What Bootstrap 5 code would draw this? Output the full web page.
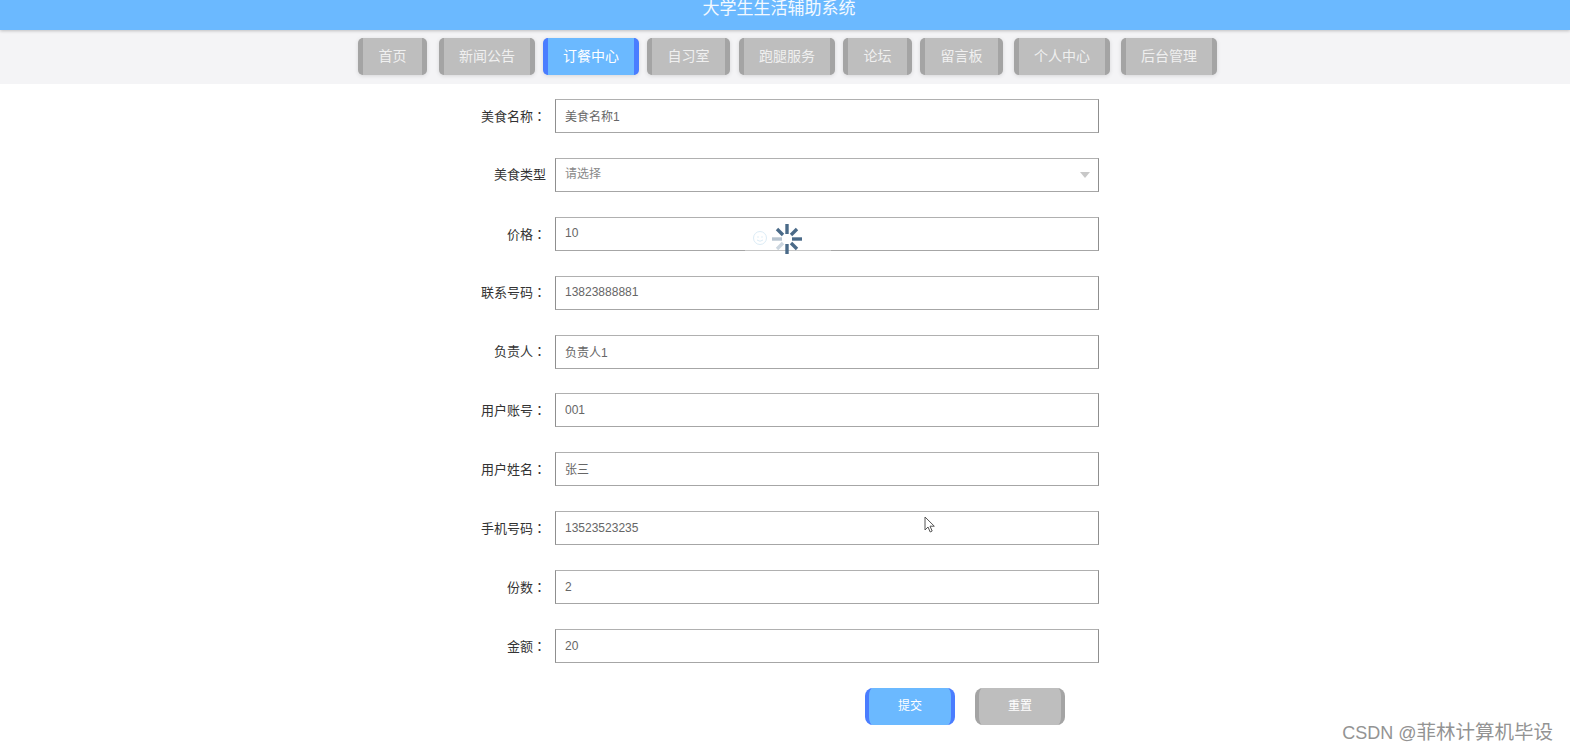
<!DOCTYPE html>
<html lang="zh-CN">
<head>
<meta charset="utf-8">
<title>大学生生活辅助系统</title>
<link href="https://cdn.jsdelivr.net/npm/bootstrap@5.3.0/dist/css/bootstrap.min.css" rel="stylesheet">
<style>
html,body{height:752px;overflow:hidden}
body{position:relative;background:#fff;font-family:"Liberation Sans","Noto Sans CJK SC",sans-serif;color:#333}
.top-title{height:30px;background:#6bb9ff;color:#f4f9ff;font-size:17px;line-height:17px;box-shadow:0 1px 3px rgba(0,0,0,.22);position:relative;z-index:1;padding-right:12px}
.menu-strip{height:54px;background:#f4f4f6;padding:8px 0 0 358px}
.menu-btn{height:37px;font-size:14px;line-height:36px;padding:0;text-align:center;color:#f0f0f0;background:#bebebe;border-radius:5px;border-left:5px solid #a4a4a4;border-right:5px solid #a4a4a4;box-shadow:0 1px 4px rgba(0,0,0,.12);text-decoration:none}
.menu-btn.on{background:#6bb9ff;border-color:#4a7dff;color:#fff}
.w69{width:69px}.w83{width:83px}.w96{width:96px}
.g8{margin-right:8px}.g9{margin-right:9px}.g11{margin-right:11px}.g12{margin-right:12px}
.order-form{padding:15px 0 0 416px;width:1099px}
.field-row{margin-bottom:24.9px;height:34px}
.field-label{width:130px;margin-right:9px;font-size:13px;color:#333;margin-bottom:0;text-align:right;flex:none}
.colon-mark{font-family:"Noto Sans CJK TC",sans-serif}
.field-box{width:544px;height:34px;flex:none;border:1px solid #8f8f8f;border-top-color:#b0b0b0;border-bottom-color:#a6a6a6;border-radius:0;font-size:12px;color:#666;padding:0 9px 1px;background-color:#fff;min-height:0;line-height:30px;box-shadow:none}
.pick-box{background-image:none;color:#888}
.pick-wrap{width:544px}
.pick-arrow{position:absolute;right:9px;top:14px;width:0;height:0;border-left:5px solid transparent;border-right:5px solid transparent;border-top:6px solid #c8c8c8}
.act-row{padding-left:449px;gap:20px}
.act-btn{width:90px;height:37px;font-size:12px;line-height:37px;padding:0;color:#fff;background:#bebebe;border:0;border-left:4px solid #a4a4a4;border-right:4px solid #a4a4a4;border-radius:8px}
.act-btn.go{background:#6bb9ff;border-color:#4a7dff}
.loader{position:absolute;left:745px;top:223px;width:86px;height:33px;background:rgba(255,255,255,.35)}
.cursor-mark{position:absolute;left:924px;top:516px}
.mark-text{position:absolute;right:17px;top:721px;font-size:18px;line-height:22px;color:#939393}
.mark-cjk{font-size:19.500px}
</style>
</head>
<body>
<header class="top-title text-center">大学生生活辅助系统</header>
<nav class="menu-strip d-flex align-items-start">
  <a class="menu-btn w69 g12" href="#">首页</a>
  <a class="menu-btn w96 g8" href="#">新闻公告</a>
  <a class="menu-btn w96 on g8" href="#">订餐中心</a>
  <a class="menu-btn w83 g9" href="#">自习室</a>
  <a class="menu-btn w96 g8" href="#">跑腿服务</a>
  <a class="menu-btn w69 g8" href="#">论坛</a>
  <a class="menu-btn w83 g11" href="#">留言板</a>
  <a class="menu-btn w96 g11" href="#">个人中心</a>
  <a class="menu-btn w96" href="#">后台管理</a>
</nav>
<form class="order-form">
  <div class="field-row d-flex align-items-center"><label class="field-label">美食名称<span class="colon-mark" lang="zh-TW">：</span></label><input class="form-control field-box" value="美食名称1"></div>
  <div class="field-row d-flex align-items-center"><label class="field-label">美食类型</label><div class="pick-wrap position-relative"><select class="form-select field-box pick-box"><option>请选择</option></select><span class="pick-arrow"></span></div></div>
  <div class="field-row d-flex align-items-center"><label class="field-label">价格<span class="colon-mark" lang="zh-TW">：</span></label><input class="form-control field-box" value="10"></div>
  <div class="field-row d-flex align-items-center"><label class="field-label">联系号码<span class="colon-mark" lang="zh-TW">：</span></label><input class="form-control field-box" value="13823888881"></div>
  <div class="field-row d-flex align-items-center"><label class="field-label">负责人<span class="colon-mark" lang="zh-TW">：</span></label><input class="form-control field-box" value="负责人1"></div>
  <div class="field-row d-flex align-items-center"><label class="field-label">用户账号<span class="colon-mark" lang="zh-TW">：</span></label><input class="form-control field-box" value="001"></div>
  <div class="field-row d-flex align-items-center"><label class="field-label">用户姓名<span class="colon-mark" lang="zh-TW">：</span></label><input class="form-control field-box" value="张三"></div>
  <div class="field-row d-flex align-items-center"><label class="field-label">手机号码<span class="colon-mark" lang="zh-TW">：</span></label><input class="form-control field-box" value="13523523235"></div>
  <div class="field-row d-flex align-items-center"><label class="field-label">份数<span class="colon-mark" lang="zh-TW">：</span></label><input class="form-control field-box" value="2"></div>
  <div class="field-row d-flex align-items-center"><label class="field-label">金额<span class="colon-mark" lang="zh-TW">：</span></label><input class="form-control field-box" value="20"></div>
  <div class="act-row d-flex">
    <button type="button" class="btn act-btn go">提交</button>
    <button type="button" class="btn act-btn">重置</button>
  </div>
</form>
<div class="loader">
  <svg width="86" height="33" viewBox="0 0 86 33" fill="none">
    <circle cx="15" cy="15" r="6.500" stroke="#dcecf6" stroke-width="1"/>
    <circle cx="13" cy="14" r=".8" fill="#dcecf6"/><circle cx="17" cy="14" r=".8" fill="#dcecf6"/>
    <path d="M12 17q3 2.500 6 0" stroke="#dcecf6" stroke-width="1"/>
    <g stroke-width="3.400">
      <path d="M42 1v10" stroke="#4a6a88"/>
      <path d="M52 6l-6 6" stroke="#4a6a88"/>
      <path d="M57 16h-10" stroke="#4a6a88"/>
      <path d="M52 26l-6-6" stroke="#4a6a88"/>
      <path d="M42 31v-10" stroke="#4a6a88"/>
      <path d="M32 26l6-6" stroke="#ccd6df"/>
      <path d="M27 16h10" stroke="#b6c3cf"/>
      <path d="M32 6l6 6" stroke="#4a6a88"/>
    </g>
  </svg>
</div>
<svg class="cursor-mark" width="12" height="17" viewBox="0 0 12 17"><path d="M1 1v13l3-3 2.200 5 2-1-2.200-4.800h4.300z" fill="#fff" stroke="#555" stroke-width="1"/></svg>
<div class="mark-text">CSDN @<span class="mark-cjk">菲林计算机毕设</span></div>
<script src="https://cdn.jsdelivr.net/npm/bootstrap@5.3.0/dist/js/bootstrap.bundle.min.js"></script>
</body>
</html>
